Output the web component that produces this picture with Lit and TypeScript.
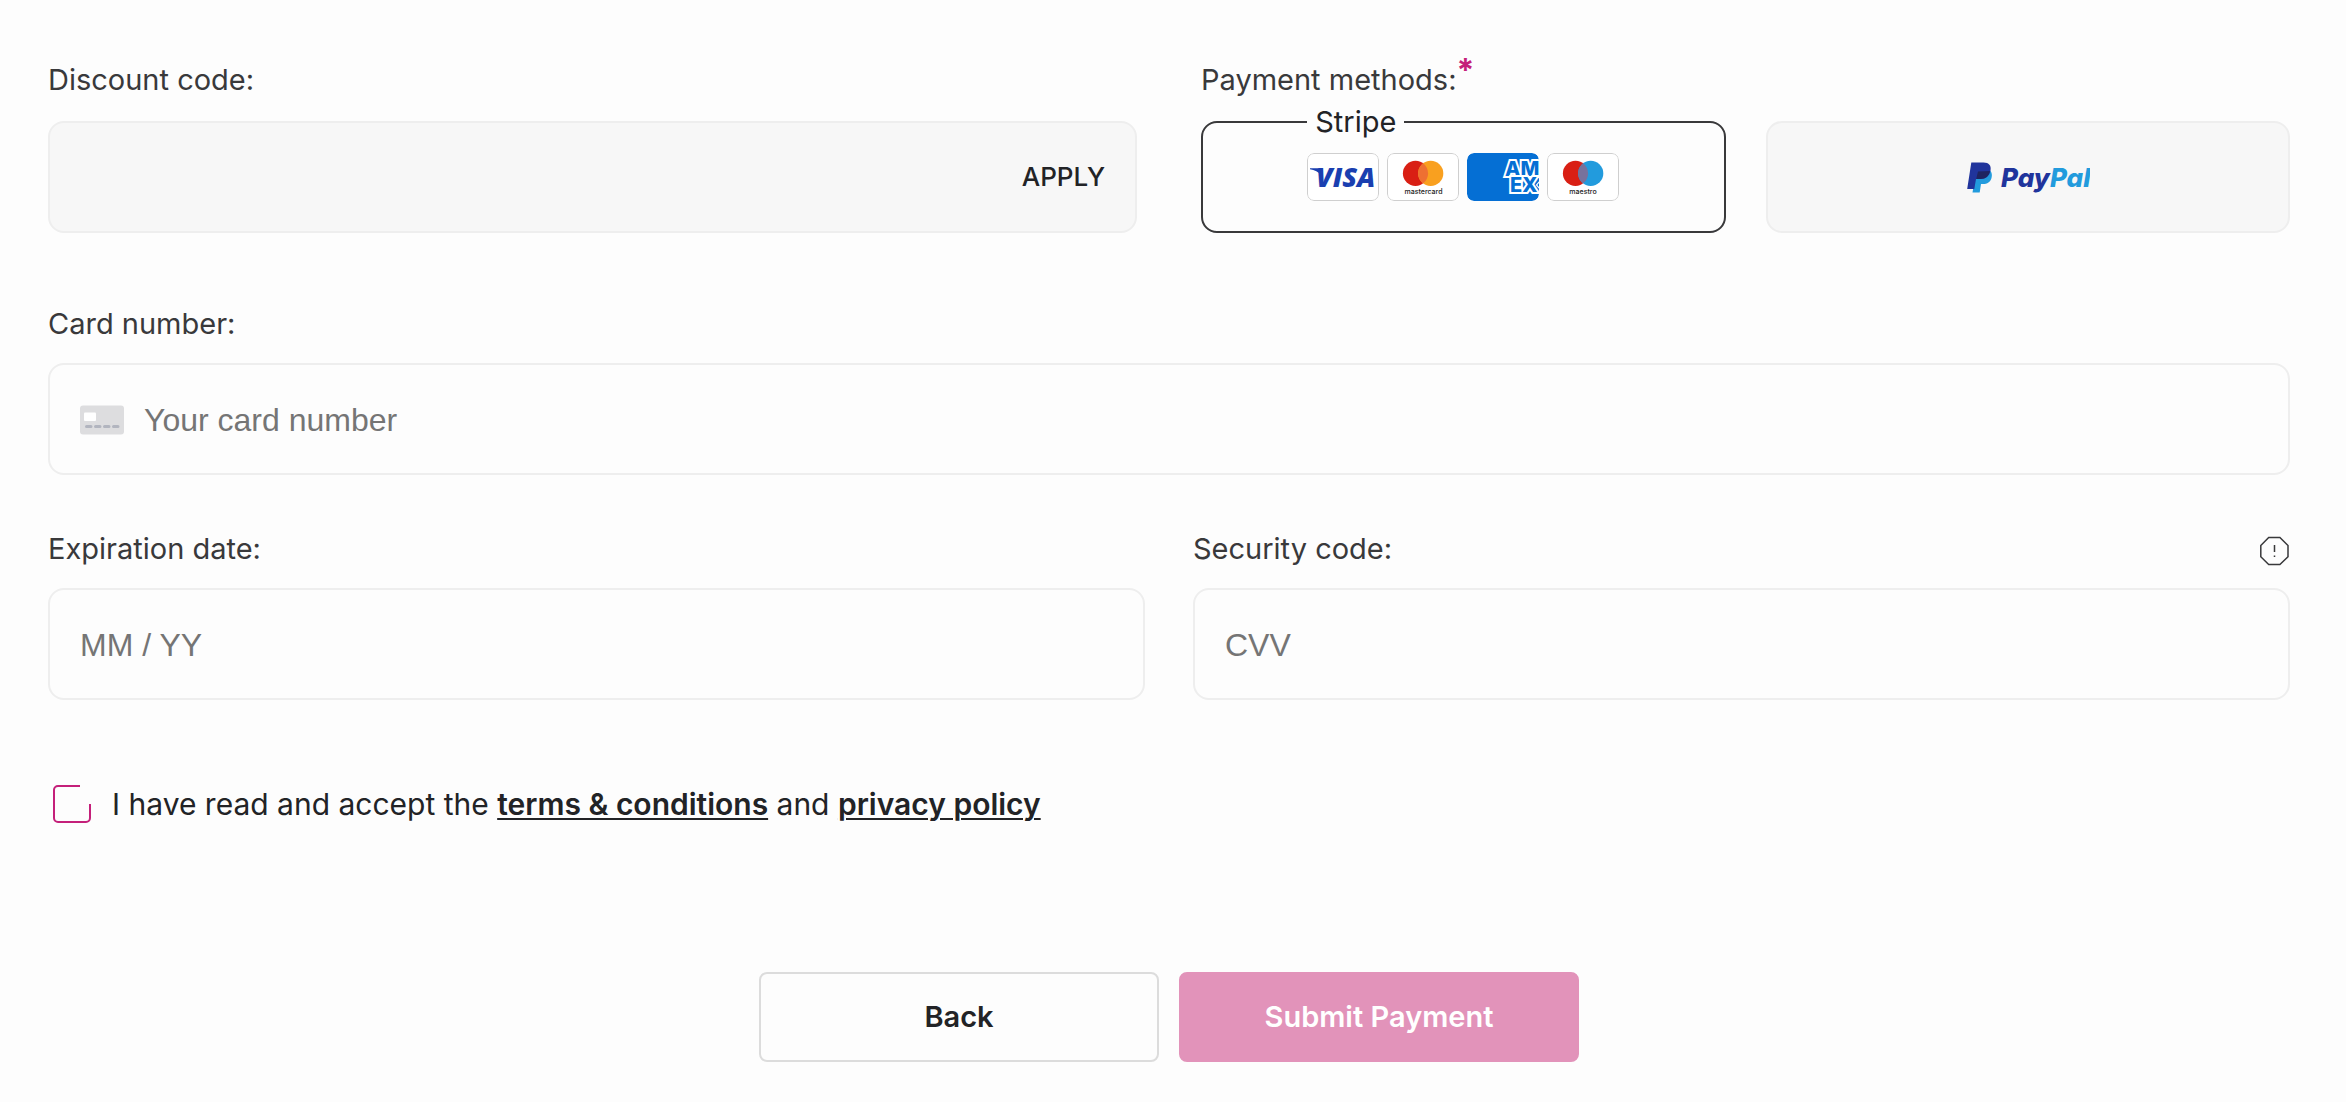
import { LitElement, html, css, svg } from "lit";
import { customElement, property, state } from "lit/decorators.js";
import { classMap } from "lit/directives/class-map.js";

type Brand = "visa" | "mastercard" | "amex" | "maestro";

const brandArt = {
  visa: svg`
    <rect x="0.5" y="0.5" width="71" height="47" rx="6.5" fill="#fff" stroke="#cfcfcf" />
    <path d="M3 15.200h8.500l3 7C11.500 19 7.500 17 3 16.200z" fill="#1a3fb0" />
    <text class="visa" x="9" y="34">VISA</text>`,
  mastercard: svg`
    <rect x="0.5" y="0.5" width="71" height="47" rx="6.5" fill="#fff" stroke="#cfcfcf" />
    <circle cx="28.500" cy="20.400" r="12.600" fill="#d91f14" />
    <circle cx="43.700" cy="20.400" r="12.600" fill="#f9a01f" />
    <path d="M36.100 10.350a12.600 12.600 0 0 1 0 20.100a12.600 12.600 0 0 1 0-20.100z" fill="#ee7032" />
    <text class="tiny" x="36.500" y="40.500">mastercard</text>`,
  amex: svg`
    <rect width="72" height="48" rx="7" fill="#056fd4" />
    <text class="amex"><tspan x="38" y="23">AM</tspan><tspan x="43" y="39">EX</tspan></text>
    <path d="M73 28l-3.500 4 3.500 4z" fill="#056fd4" stroke="#fff" stroke-width="1.200" />`,
  maestro: svg`
    <rect x="0.5" y="0.5" width="71" height="47" rx="6.5" fill="#fff" stroke="#cfcfcf" />
    <circle cx="28.500" cy="20.400" r="12.600" fill="#d91f14" />
    <circle cx="43.700" cy="20.400" r="12.600" fill="#229bdd" />
    <path d="M36.100 10.350a12.600 12.600 0 0 1 0 20.100a12.600 12.600 0 0 1 0-20.100z" fill="#77729c" />
    <text class="tiny" x="36" y="40.500">maestro</text>`,
};

@customElement("card-brand")
export class CardBrand extends LitElement {
  @property() brand: Brand = "visa";

  static styles = css`
    :host {
      display: block;
      width: 72px;
      height: 48px;
    }
    .art {
      display: block;
      width: 100%;
      height: 100%;
      overflow: hidden;
      border-radius: 7px;
    }
    .visa {
      font: italic 800 27px "Open Sans", sans-serif;
      fill: #1a3fb0;
    }
    .tiny {
      font: 500 7px Inter, sans-serif;
      text-anchor: middle;
      fill: #222;
    }
    .amex {
      font: 800 20px Inter, sans-serif;
      fill: #056fd4;
      stroke: #fff;
      stroke-width: 4px;
      paint-order: stroke;
    }
  `;

  render() {
    return html`<svg class="art" viewBox="0 0 72 48" role="img" aria-label=${this.brand}>
      ${brandArt[this.brand]}
    </svg>`;
  }
}

@customElement("app-root")
export class AppRoot extends LitElement {
  @state() private method = "stripe";
  @state() private accepted = false;

  static styles = css`
    :host {
      display: block;
      min-height: 100vh;
      background: #fdfdfd;
      color: #222326;
      font: 400 29px/42px Inter, sans-serif;
    }
    *,
    *::before {
      box-sizing: border-box;
    }
    .form {
      display: flex;
      flex-direction: column;
      padding: 59px 56px 40px 48px;
    }
    .pair {
      display: grid;
      grid-template-columns: 1fr 1fr;
      gap: 48px;
    }
    .pair.top {
      gap: 64px;
    }
    .field {
      display: flex;
      flex-direction: column;
      gap: 18px;
      min-width: 0;
      margin: 0;
      padding: 0;
      border: 0;
    }
    .top .field {
      gap: 20px;
    }
    .card-row {
      margin-top: 70px;
    }
    .expiry-row {
      margin-top: 53px;
    }
    .caption {
      display: flex;
      align-items: center;
      justify-content: space-between;
      height: 42px;
      color: #39393b;
    }
    .required {
      align-self: flex-start;
      margin-right: auto;
      font-size: 32px;
      font-weight: 700;
      line-height: 24px;
      color: #c4207a;
    }
    .box {
      display: flex;
      align-items: center;
      gap: 20px;
      height: 112px;
      padding: 2px 30px 0;
      border: 2px solid #eeeeee;
      border-radius: 16px;
    }
    .box.filled {
      padding: 0 30px;
      background: #f7f7f7;
    }
    .entry {
      flex: 1;
      min-width: 0;
      height: 100%;
      padding: 0;
      border: 0;
      outline: 0;
      background: none;
      color: #39393b;
      font: 400 32px "Liberation Sans", sans-serif;
    }
    .entry::placeholder {
      color: #757575;
      opacity: 1;
    }
    .apply {
      padding: 0;
      border: 0;
      background: none;
      color: #222326;
      font: 500 26px/42px Inter, sans-serif;
      cursor: pointer;
    }
    .card-icon {
      width: 44px;
      height: 30px;
    }
    .hint {
      display: flex;
      padding: 0;
      border: 0;
      background: none;
      cursor: pointer;
    }
    .hint-icon {
      width: 30px;
      height: 34px;
    }
    .methods {
      display: grid;
      grid-template-columns: 1fr 1fr;
      gap: 40px;
    }
    .method {
      position: relative;
      justify-content: center;
      padding: 0;
      background: #f7f7f7;
      cursor: pointer;
    }
    .method.chosen {
      background: none;
      border-color: #39393b;
    }
    .method-radio {
      position: absolute;
      inset: 0;
      margin: 0;
      opacity: 0;
    }
    .brands {
      position: relative;
      display: flex;
      gap: 8px;
    }
    .method-name {
      position: absolute;
      left: 0;
      bottom: 100%;
      margin-bottom: 10px;
      padding: 0 8px;
      background: #fdfdfd;
    }
    .paypal {
      width: 124px;
      height: 36px;
    }
    .paypal-word {
      font: italic 800 26px Inter, sans-serif;
      fill: #20349c;
    }
    .paypal-pal {
      fill: #229bdd;
    }
    .consent {
      display: flex;
      align-items: center;
      gap: 16px;
      margin-top: 80px;
      font-size: 30px;
    }
    .tick {
      display: grid;
      width: 48px;
      height: 48px;
    }
    .tick > * {
      grid-area: 1 / 1;
    }
    .tick-input {
      appearance: none;
      width: 48px;
      height: 48px;
      margin: 0;
      cursor: pointer;
    }
    .tick-art {
      width: 48px;
      height: 48px;
      pointer-events: none;
    }
    .link {
      color: inherit;
      font-weight: 600;
      text-decoration: underline;
      text-decoration-thickness: 2px;
      text-underline-offset: 3px;
    }
    .actions {
      display: flex;
      justify-content: center;
      gap: 20px;
      margin-top: 144px;
    }
    .action {
      width: 400px;
      height: 90px;
      border: 2px solid #dcdcdc;
      border-radius: 8px;
      background: none;
      color: #222326;
      font: 600 29px/42px Inter, sans-serif;
      cursor: pointer;
    }
    .action.primary {
      border-color: #e293ba;
      background: #e293ba;
      color: #fff;
    }
  `;

  private pick(e: Event) {
    this.method = (e.target as HTMLInputElement).value;
  }

  private toggle(e: Event) {
    this.accepted = (e.target as HTMLInputElement).checked;
  }

  private methodClass(name: string) {
    return classMap({ box: true, method: true, chosen: this.method === name });
  }

  render() {
    return html`
      <form class="form" @submit=${(e: Event) => e.preventDefault()}>
        <div class="pair top">
          <div class="field">
            <label class="caption" for="discount">Discount code:</label>
            <div class="box filled">
              <input class="entry" id="discount" type="text" />
              <button class="apply" type="button">APPLY</button>
            </div>
          </div>
          <div class="field" role="radiogroup" aria-labelledby="methods-caption">
            <div class="caption" id="methods-caption">
              <span>Payment methods:</span><span class="required">*</span>
            </div>
            <div class="methods">
              <label class=${this.methodClass("stripe")}>
                <input class="method-radio" type="radio" name="method" value="stripe"
                  .checked=${this.method === "stripe"} @change=${this.pick} />
                <span class="brands">
                  <span class="method-name">Stripe</span>
                  <card-brand brand="visa"></card-brand>
                  <card-brand brand="mastercard"></card-brand>
                  <card-brand brand="amex"></card-brand>
                  <card-brand brand="maestro"></card-brand>
                </span>
              </label>
              <label class=${this.methodClass("paypal")}>
                <input class="method-radio" type="radio" name="method" value="paypal" aria-label="PayPal"
                  .checked=${this.method === "paypal"} @change=${this.pick} />
                <svg class="paypal" viewBox="0 0 124 36" aria-hidden="true">
                  <path d="M24 11.500c2 2 2.300 4.500 1.500 7.500-1.200 4.200-4.200 6-8.500 6h-2l-1.300 8.500H6.500L9 18.500z" fill="#229bdd" />
                  <path d="M5.300 3.500h12.200c5.500 0 8 3 7 8-1 5.500-4.500 8.500-10 8.500H10L8.300 30H1.200z" fill="#20349c" />
                  <path d="M12 12.500L24 12c-1 5-4.500 8-9.500 8H10.200z" fill="#1f2460" />
                  <text class="paypal-word" x="35" y="28">Pay<tspan class="paypal-pal">Pal</tspan></text>
                </svg>
              </label>
            </div>
          </div>
        </div>

        <div class="field card-row">
          <label class="caption" for="number">Card number:</label>
          <div class="box">
            <svg class="card-icon" viewBox="0 0 44 30" aria-hidden="true">
              <rect width="44" height="29" y="0.5" rx="3" fill="#dddddf" />
              <rect x="4" y="7.500" width="12" height="8.500" rx="1" fill="#fff" />
              <path d="M6.500 21.500h4.500M15.500 21.500H20M24.500 21.500H29M33.500 21.500H38" stroke="#b2b5bf"
                stroke-width="3" stroke-linecap="round" />
            </svg>
            <input class="entry" id="number" type="text" inputmode="numeric" placeholder="Your card number" />
          </div>
        </div>

        <div class="pair expiry-row">
          <div class="field">
            <label class="caption" for="expiry">Expiration date:</label>
            <div class="box">
              <input class="entry" id="expiry" type="text" placeholder="MM / YY" />
            </div>
          </div>
          <div class="field">
            <div class="caption">
              <label for="cvv">Security code:</label>
              <button class="hint" type="button" aria-label="About the security code">
                <svg class="hint-icon" viewBox="0 0 30 34" aria-hidden="true">
                  <path d="M8.700 5.500h11.200L28 13.500v11.200L19.900 32.500H8.700L0.800 24.700V13.500z" fill="none" stroke="#39393b"
                    stroke-width="1.500" />
                  <path d="M14.500 13v7M14.500 23.400v1.600" stroke="#39393b" stroke-width="1.500" />
                </svg>
              </button>
            </div>
            <div class="box">
              <input class="entry" id="cvv" type="text" inputmode="numeric" placeholder="CVV" />
            </div>
          </div>
        </div>

        <div class="consent">
          <span class="tick">
            <input class="tick-input" id="consent" type="checkbox" .checked=${this.accepted}
              @change=${this.toggle} />
            <svg class="tick-art" viewBox="0 0 48 48" aria-hidden="true">
              <path d="M32 6H10a4 4 0 0 0-4 4v28a4 4 0 0 0 4 4h28a4 4 0 0 0 4-4V24" fill="none"
                stroke="#c4207a" stroke-width="2" />
              ${this.accepted
                ? svg`<path d="M14 22l9 9L42 8" fill="none" stroke="#c4207a" stroke-width="3" />`
                : null}
            </svg>
          </span>
          <label for="consent">I have read and accept the
            <a class="link" href="#terms">terms &amp; conditions</a> and
            <a class="link" href="#privacy">privacy policy</a></label>
        </div>

        <div class="actions">
          <button class="action" type="button">Back</button>
          <button class="action primary" type="submit">Submit Payment</button>
        </div>
      </form>
    `;
  }
}
